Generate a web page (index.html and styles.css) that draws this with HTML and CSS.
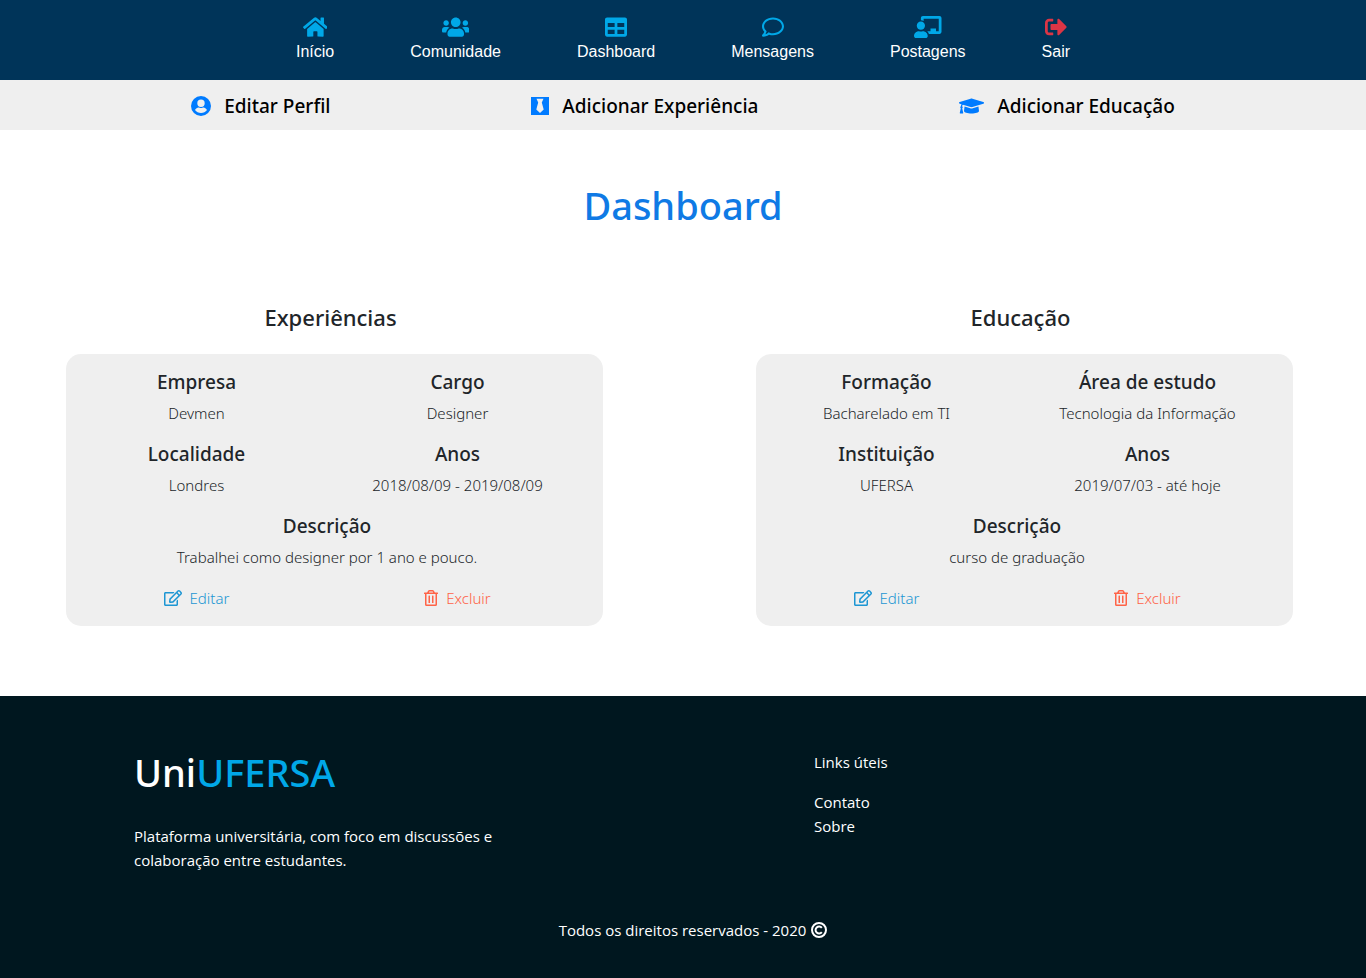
FILE: index.html
```html
<!DOCTYPE html>
<html lang="pt-BR">
<head>
<meta charset="utf-8">
<meta name="viewport" content="width=device-width, initial-scale=1">
<title>UniUFERSA - Dashboard</title>
<link rel="stylesheet" href="styles.css">
</head>
<body>
<svg class="sprite" aria-hidden="true">
  <symbol id="edit" viewBox="0 0 576 512"><path d="M402.300 344.900l32-32c5-5 13.700-1.500 13.700 5.700V464c0 26.500-21.500 48-48 48H48c-26.500 0-48-21.500-48-48V112c0-26.500 21.500-48 48-48h273.500c7.100 0 10.700 8.600 5.700 13.700l-32 32c-1.500 1.500-3.500 2.300-5.700 2.300H48v352h352V350.500c0-2.100.8-4.100 2.300-5.600zm156.600-201.800L296.300 405.700l-90.400 10c-26.200 2.900-48.500-19.200-45.600-45.600l10-90.400L432.900 17.100c22.900-22.900 59.900-22.900 82.700 0l43.200 43.200c22.900 22.900 22.900 60 .1 82.800zM460.100 174L402 115.900 216.200 301.800l-7.300 65.300 65.300-7.300L460.100 174zm64.800-79.700l-43.200-43.200c-4.100-4.100-10.800-4.100-14.800 0L436 82l58.100 58.100 30.900-30.900c4-4.200 4-10.800-.1-14.900z"/></symbol>
  <symbol id="trash" viewBox="0 0 448 512"><path d="M268 416h24a12 12 0 0 0 12-12V188a12 12 0 0 0-12-12h-24a12 12 0 0 0-12 12v216a12 12 0 0 0 12 12zM432 80h-82.410l-34-56.700A48 48 0 0 0 274.410 0H173.590a48 48 0 0 0-41.160 23.300L98.410 80H16A16 16 0 0 0 0 96v16a16 16 0 0 0 16 16h16v336a48 48 0 0 0 48 48h288a48 48 0 0 0 48-48V128h16a16 16 0 0 0 16-16V96a16 16 0 0 0-16-16zM171.840 50.910A6 6 0 0 1 177 48h94a6 6 0 0 1 5.150 2.910L293.610 80H154.390zM368 464H80V128h288zm-212-48h24a12 12 0 0 0 12-12V188a12 12 0 0 0-12-12h-24a12 12 0 0 0-12 12v216a12 12 0 0 0 12 12z"/></symbol>
</svg>

<nav class="nav" aria-label="Principal">
  <a class="nav-link" href="#inicio">
    <svg class="nav-icon" viewBox="0 0 576 512" aria-hidden="true"><path d="M280.370 148.260L96 300.110V464a16 16 0 0 0 16 16l112.060-.29a16 16 0 0 0 15.920-16V368a16 16 0 0 1 16-16h64a16 16 0 0 1 16 16v95.640a16 16 0 0 0 16 16.050L464 480a16 16 0 0 0 16-16V300L295.670 148.260a12.190 12.190 0 0 0-15.300 0zM571.600 251.470L488 182.560V44.050a12 12 0 0 0-12-12h-56a12 12 0 0 0-12 12v72.610L318.470 43a48 48 0 0 0-61 0L4.340 251.470a12 12 0 0 0-1.600 16.900l25.500 31A12 12 0 0 0 45.150 301l235.220-193.740a12.190 12.190 0 0 1 15.300 0L530.900 301a12 12 0 0 0 16.900-1.600l25.500-31a12 12 0 0 0-1.700-16.930z"/></svg>
    <span>Início</span>
  </a>
  <a class="nav-link" href="#comunidade">
    <svg class="nav-icon" viewBox="0 0 640 512" aria-hidden="true"><path d="M96 224c35.300 0 64-28.700 64-64s-28.700-64-64-64-64 28.700-64 64 28.700 64 64 64zm448 0c35.300 0 64-28.700 64-64s-28.700-64-64-64-64 28.700-64 64 28.700 64 64 64zm32 32h-64c-17.600 0-33.500 7.100-45.100 18.600 40.300 22.100 68.900 62 75.100 109.400h66c17.700 0 32-14.300 32-32v-32c0-35.300-28.700-64-64-64zm-256 0c61.900 0 112-50.100 112-112S381.900 32 320 32 208 82.100 208 144s50.100 112 112 112zm76.800 32h-8.300c-20.800 10-43.900 16-68.500 16s-47.600-6-68.500-16h-8.300C179.600 288 128 339.600 128 403.200V432c0 26.500 21.500 48 48 48h288c26.500 0 48-21.500 48-48v-28.800c0-63.600-51.600-115.200-115.200-115.200zm-223.700-13.400C161.500 263.100 145.600 256 128 256H64c-35.300 0-64 28.700-64 64v32c0 17.700 14.300 32 32 32h65.900c6.300-47.400 34.900-87.300 75.200-109.400z"/></svg>
    <span>Comunidade</span>
  </a>
  <a class="nav-link" href="#dashboard">
    <svg class="nav-icon" viewBox="0 0 512 512" aria-hidden="true"><path d="M464 32H48C21.490 32 0 53.490 0 80v352c0 26.510 21.490 48 48 48h416c26.510 0 48-21.490 48-48V80c0-26.510-21.490-48-48-48zM224 416H64v-96h160v96zm0-160H64v-96h160v96zm224 160H288v-96h160v96zm0-160H288v-96h160v96z"/></svg>
    <span>Dashboard</span>
  </a>
  <a class="nav-link" href="#mensagens">
    <svg class="nav-icon" viewBox="0 0 512 512" aria-hidden="true"><path d="M256 32C114.600 32 0 125.100 0 240c0 47.600 19.900 91.200 52.900 126.300C38 405.700 7 439.100 6.500 439.500c-6.600 7-8.400 17.200-4.600 26S14.400 480 24 480c61.500 0 110-25.700 139.100-46.300C192 442.800 223.200 448 256 448c141.400 0 256-93.100 256-208S397.400 32 256 32zm0 368c-26.700 0-53.100-4.100-78.400-12.100l-22.700-7.200-19.500 13.800c-14.300 10.100-33.900 21.400-57.500 29 7.300-12.100 14.400-25.700 19.900-40.200l10.600-28.100-20.600-21.800C69.700 314.100 48 282.200 48 240c0-88.200 93.300-160 208-160s208 71.800 208 160-93.300 160-208 160z"/></svg>
    <span>Mensagens</span>
  </a>
  <a class="nav-link" href="#postagens">
    <svg class="nav-icon" viewBox="0 0 640 512" aria-hidden="true"><path d="M208 352c-2.390 0-4.780.35-7.060 1.090C187.980 357.300 174.350 360 160 360c-14.350 0-27.980-2.700-40.950-6.910-2.280-.74-4.660-1.090-7.050-1.090C49.940 352-.33 402.480 0 464.620.14 490.880 21.730 512 48 512h224c26.270 0 47.860-21.120 48-47.380.33-62.140-49.940-112.620-112-112.620zm-48-32c53.020 0 96-42.980 96-96s-42.980-96-96-96-96 42.980-96 96 42.980 96 96 96zM592 0H208c-26.470 0-48 22.250-48 49.590V96c23.420 0 45.100 6.780 64 17.800V64h352v288h-64v-64H384v64h-76.240c19.100 16.690 33.120 38.730 39.690 64H592c26.470 0 48-22.250 48-49.590V49.590C640 22.250 618.470 0 592 0z"/></svg>
    <span>Postagens</span>
  </a>
  <a class="nav-link" href="#sair">
    <svg class="nav-icon nav-icon-exit" viewBox="0 0 512 512" aria-hidden="true"><path d="M497 273L329 441c-15 15-41 4.500-41-17v-96H152c-13.300 0-24-10.700-24-24v-96c0-13.300 10.700-24 24-24h136V88c0-21.400 25.900-32 41-17l168 168c9.300 9.400 9.300 24.600 0 34zM192 436v-40c0-6.600-5.400-12-12-12H96c-17.700 0-32-14.300-32-32V160c0-17.700 14.300-32 32-32h84c6.600 0 12-5.400 12-12V76c0-6.600-5.400-12-12-12H96c-53 0-96 43-96 96v192c0 53 43 96 96 96h84c6.600 0 12-5.400 12-12z"/></svg>
    <span>Sair</span>
  </a>
</nav>

<nav class="subnav" aria-label="Perfil">
  <a class="subnav-link" href="#perfil">
    <svg class="subnav-icon" viewBox="0 0 20 20" aria-hidden="true"><path fill-rule="evenodd" d="M10 0a10 10 0 1 0 0 20 10 10 0 0 0 0-20zM10 3.500a3.700 3.700 0 1 1 0 7.400 3.700 3.700 0 0 1 0-7.400zM10 17a7.500 7.500 0 0 1-6-3c.9-1.600 2.200-2.500 3.500-2.500.6 0 1.300.5 2.500.5s1.900-.5 2.500-.5c1.300 0 2.600.9 3.500 2.500a7.500 7.500 0 0 1-6 3z"/></svg>
    <span>Editar Perfil</span>
  </a>
  <a class="subnav-link" href="#nova-experiencia">
    <svg class="subnav-icon subnav-icon-tie" viewBox="0 0 18 18" aria-hidden="true"><path fill-rule="evenodd" d="M0 0h18v18H0zM5.500 1.800h7L10.800 5.500l1.900 7L9 16l-3.700-3.500 1.900-7z"/></svg>
    <span>Adicionar Experiência</span>
  </a>
  <a class="subnav-link" href="#nova-educacao">
    <svg class="subnav-icon" viewBox="0 0 640 512" aria-hidden="true"><path d="M622.340 153.200L343.400 67.500c-15.200-4.670-31.600-4.670-46.790 0L17.660 153.200c-23.540 7.230-23.540 38.360 0 45.590l48.630 14.940c-10.670 13.190-17.230 29.280-17.880 46.900C38.780 266.150 32 276.110 32 288c0 10.780 5.680 19.850 13.860 25.650L20.330 428.530C18.110 438.520 25.710 448 35.940 448h56.110c10.240 0 17.840-9.480 15.620-19.470L82.140 313.650C90.320 307.850 96 298.780 96 288c0-11.570-6.470-21.250-15.660-26.870.76-15.020 8.440-28.300 20.690-36.720L296.600 284.500c9.060 2.780 26.440 6.250 46.790 0l278.950-85.700c23.550-7.240 23.550-38.360 0-45.600zM352.790 315.090c-28.530 8.760-52.840 3.920-65.590 0l-145.020-44.550L128 384c0 35.350 85.960 64 192 64s192-28.650 192-64l-14.180-113.470-145.030 44.560z"/></svg>
    <span>Adicionar Educação</span>
  </a>
</nav>

<main class="main">
  <h1 class="title">Dashboard</h1>
  <div class="columns">
    <section class="column">
      <h2 class="column-title">Experiências</h2>
      <article class="card">
        <div class="field"><h3 class="label">Empresa</h3><p class="value">Devmen</p></div>
        <div class="field"><h3 class="label">Cargo</h3><p class="value">Designer</p></div>
        <div class="field"><h3 class="label">Localidade</h3><p class="value">Londres</p></div>
        <div class="field"><h3 class="label">Anos</h3><p class="value">2018/08/09 - 2019/08/09</p></div>
        <div class="field field-wide"><h3 class="label">Descrição</h3><p class="value">Trabalhei como designer por 1 ano e pouco.</p></div>
        <a class="action action-edit" href="#editar-experiencia"><svg class="action-icon" viewBox="0 0 576 512" aria-hidden="true"><use href="#edit"/></svg>Editar</a>
        <button class="action action-delete" type="button"><svg class="action-icon" viewBox="0 0 448 512" aria-hidden="true"><use href="#trash"/></svg>Excluir</button>
      </article>
    </section>
    <section class="column">
      <h2 class="column-title">Educação</h2>
      <article class="card">
        <div class="field"><h3 class="label">Formação</h3><p class="value">Bacharelado em TI</p></div>
        <div class="field"><h3 class="label">Área de estudo</h3><p class="value">Tecnologia da Informação</p></div>
        <div class="field"><h3 class="label">Instituição</h3><p class="value">UFERSA</p></div>
        <div class="field"><h3 class="label">Anos</h3><p class="value">2019/07/03 - até hoje</p></div>
        <div class="field field-wide"><h3 class="label">Descrição</h3><p class="value">curso de graduação</p></div>
        <a class="action action-edit" href="#editar-educacao"><svg class="action-icon" viewBox="0 0 576 512" aria-hidden="true"><use href="#edit"/></svg>Editar</a>
        <button class="action action-delete" type="button"><svg class="action-icon" viewBox="0 0 448 512" aria-hidden="true"><use href="#trash"/></svg>Excluir</button>
      </article>
    </section>
  </div>
</main>

<footer class="footer">
  <div class="footer-columns">
    <div>
      <div class="brand">Uni<span class="brand-accent">UFERSA</span></div>
      <p class="about">Plataforma universitária, com foco em discussões e colaboração entre estudantes.</p>
    </div>
    <div class="links">
      <p class="links-title">Links úteis</p>
      <a href="#contato">Contato</a>
      <a href="#sobre">Sobre</a>
    </div>
  </div>
  <p class="copyright">Todos os direitos reservados - 2020
    <svg class="copyright-icon" viewBox="0 0 16 16" aria-hidden="true"><circle cx="8" cy="8" r="7"/><path d="M10.800 10.200a3.500 3.500 0 1 1 0-4.400"/></svg>
  </p>
</footer>
</body>
</html>
```
FILE: styles.css
```css
* { box-sizing: border-box; }

body {
  margin: 0;
  background: #fff;
  color: #212529;
  font-family: "Segoe UI", "Open Sans", "Noto Sans", sans-serif;
  font-size: 15px;
  line-height: 24px;
}

h1, h2, h3, p { margin: 0; font-weight: 500; }
a { color: inherit; text-decoration: none; }
svg { fill: currentColor; }
.sprite { display: none; }

.nav {
  display: flex;
  justify-content: center;
  gap: 76px;
  height: 80px;
  padding-top: 16px;
  background: #003459;
  color: #fff;
  font-family: "Liberation Sans", Arial, sans-serif;
  font-size: 16px;
}
.nav-link { display: flex; flex-direction: column; align-items: center; gap: 2px; }
.nav-icon { height: 22px; color: #00a8e8; }
.nav-icon-exit { color: #dc3545; }

.subnav {
  display: flex;
  justify-content: space-between;
  align-items: center;
  height: 50px;
  padding: 1px 14% 0;
  background: #efefef;
  color: #000;
  font-size: 19px;
  font-weight: 500;
}
.subnav-link { display: flex; align-items: center; gap: 13px; }
.subnav-icon { height: 20px; color: #007bff; }
.subnav-icon-tie { height: 18px; }

.subnav, .title, .column-title, .label, .value, .action, .brand {
  font-family: "Segoe UI", "Noto Sans", sans-serif;
}

.main { padding: 51px 73px 70px 66px; }
.title {
  color: #0f7ae5;
  font-size: 38px;
  line-height: 48px;
  font-weight: 500;
  text-align: center;
  padding-left: 7px;
}
.columns { display: grid; grid-template-columns: 1fr 1fr; gap: 153px; padding-top: 72px; }
.column-title {
  padding-right: 8px;
  font-size: 22px;
  line-height: 32px;
  text-align: center;
}
.card {
  display: grid;
  grid-template-columns: 1fr 1fr;
  row-gap: 17px;
  margin-top: 21px;
  padding: 16px 15px 16px 0;
  border-radius: 15px;
  background: #efefef;
  text-align: center;
}
.field-wide { grid-column: 1 / -1; }
.label { font-size: 19px; line-height: 24px; }
.value { padding-top: 7px; font-weight: 350; }

.action {
  display: flex;
  justify-content: center;
  align-items: center;
  gap: 8px;
  padding: 0;
  border: 0;
  background: none;
  font-size: 15px;
  line-height: 24px;
  font-weight: 350;
}
.action-icon { height: 16px; }
.action-edit { color: #1d96d3; }
.action-delete { color: #ff6347; cursor: pointer; }

.footer { padding: 48px 0 36px; background: #00171f; color: #fff; }
.footer-columns {
  display: grid;
  grid-template-columns: 1fr 1fr;
  column-gap: 262px;
  padding: 0 134px;
}
.brand { font-size: 38px; line-height: 56px; font-weight: 500; }
.brand-accent { color: #00a8e8; }
.about { padding-top: 24px; font-weight: 400; }
.links { display: flex; flex-direction: column; padding-top: 6px; }
.links-title { padding-bottom: 16px; font-weight: 400; }
.copyright {
  display: flex;
  justify-content: center;
  align-items: center;
  gap: 5px;
  padding: 46px 0 0 20px;
  font-weight: 400;
}
.copyright-icon {
  height: 16px;
  fill: none;
  stroke: currentColor;
  stroke-width: 2;
}
```
